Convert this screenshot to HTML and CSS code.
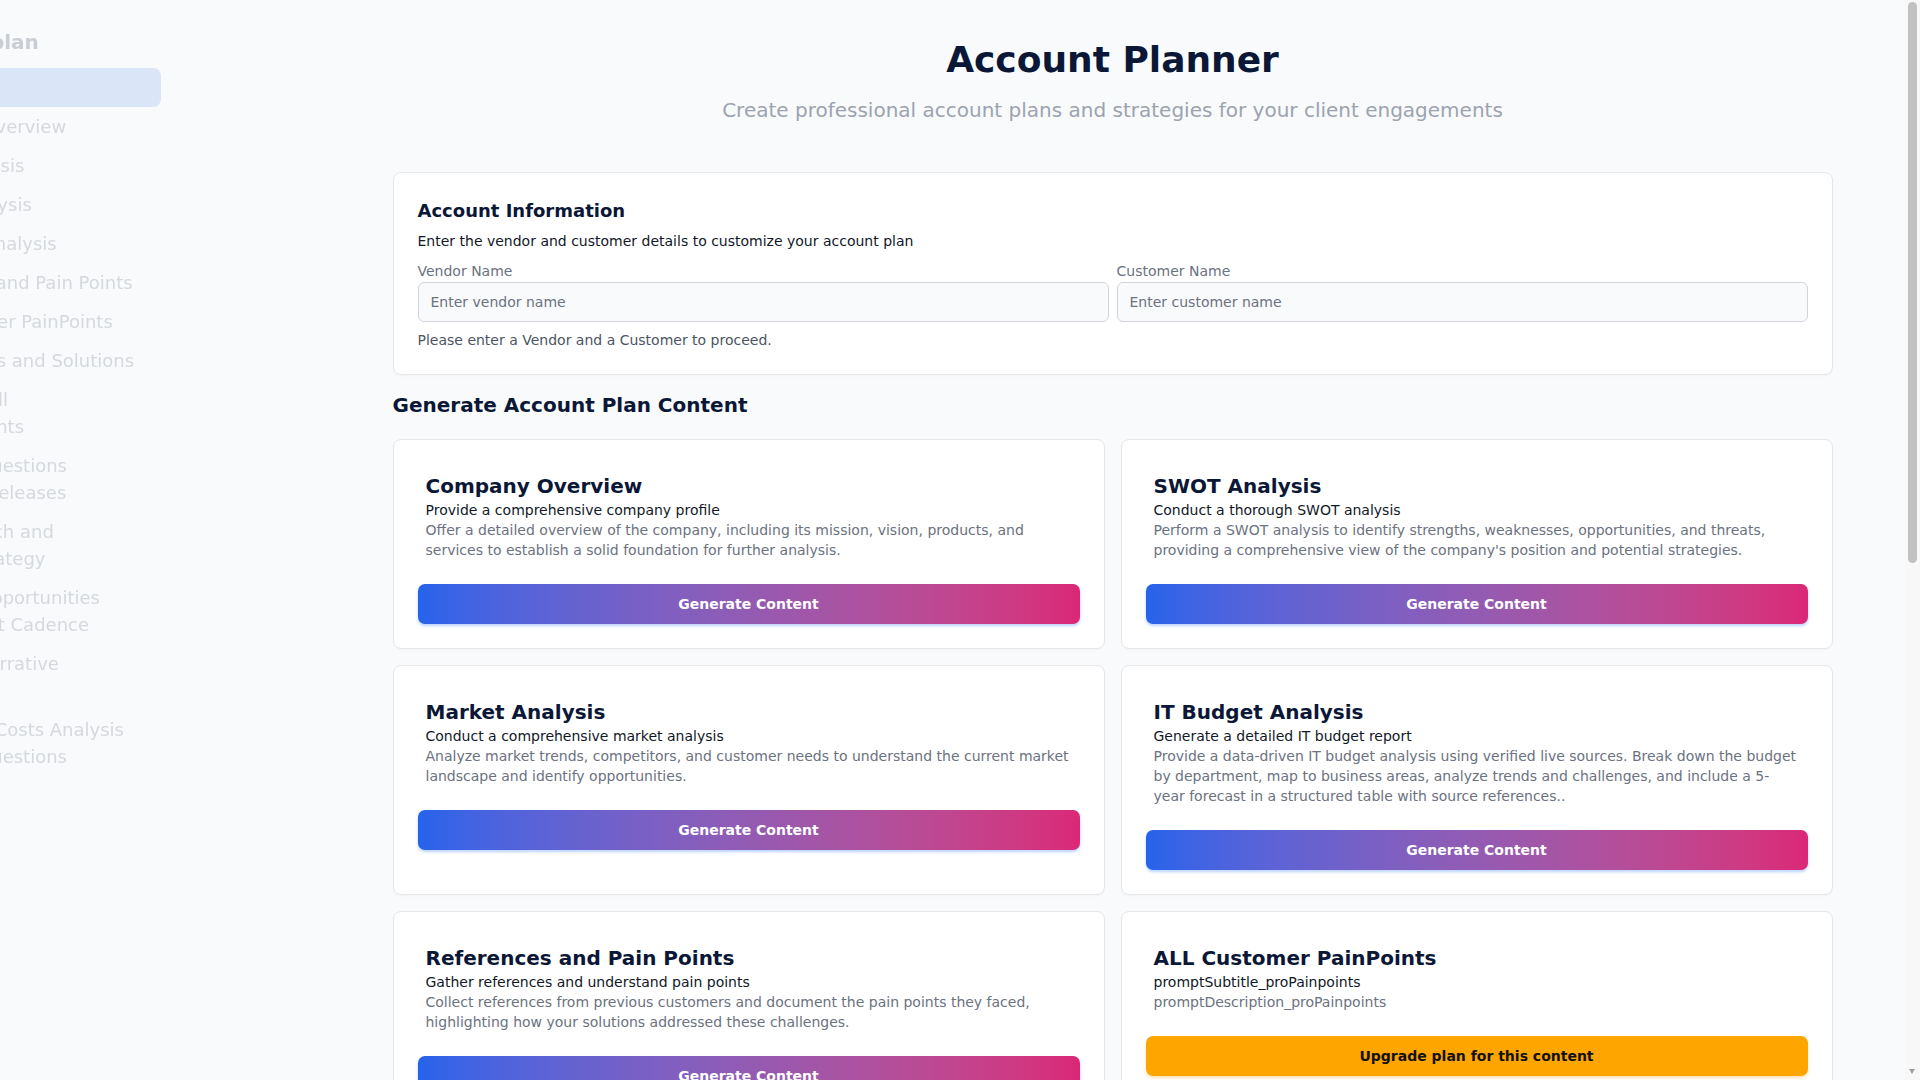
FILE: index.html
```html
<!DOCTYPE html>
<html lang="en">
  <head>
    <meta charset="UTF-8" />
    <meta name="viewport" content="width=device-width, initial-scale=1.0" />
    <title>Account Planner</title>
    <link rel="stylesheet" href="styles.css">
  </head>
  <body>
    <aside class="sidebar">
      <div class="sidebar_title">Account plan</div>
      <ul class="nav">
        <li class="active">Dashboard</li>
        <li>Company Overview</li>
        <li>SWOT Analysis</li>
        <li>Market Analysis</li>
        <li>IT Budget Analysis</li>
        <li>References and Pain Points</li>
        <li>ALL Customer PainPoints</li>
        <li>Key Products and Solutions</li>
        <li>Future Upsell<br>Enhancements</li>
        <li>Strategic Questions<br>Upcoming Releases</li>
        <li>Our Approach and<br>Account Strategy</li>
        <li>Strategic Opportunities<br>Engagement Cadence</li>
        <li>Business Narrative<br>Summary</li>
        <li>Operations Costs Analysis<br>Strategic Questions</li>
      </ul>
    </aside>

    <main class="main">
      <div class="container">
        <header class="page_head">
          <h1>Account Planner</h1>
          <p>Create professional account plans and strategies for your client engagements</p>
        </header>

        <section class="card info_card">
          <h3>Account Information</h3>
          <p class="info_desc">Enter the vendor and customer details to customize your account plan</p>
          <div class="fields">
            <label class="field">
              <span>Vendor Name</span>
              <input type="text" placeholder="Enter vendor name" />
            </label>
            <label class="field">
              <span>Customer Name</span>
              <input type="text" placeholder="Enter customer name" />
            </label>
          </div>
          <p class="hint">Please enter a Vendor and a Customer to proceed.</p>
        </section>

        <h2 class="section_title">Generate Account Plan Content</h2>

        <div class="prompt_grid">
          <div class="card prompt">
            <div class="prompt_head">
              <h3>Company Overview</h3>
              <p class="sub">Provide a comprehensive company profile</p>
              <p class="desc">Offer a detailed overview of the company, including its mission, vision, products, and services to establish a solid foundation for further analysis.</p>
            </div>
            <button class="btn">Generate Content</button>
          </div>

          <div class="card prompt">
            <div class="prompt_head">
              <h3>SWOT Analysis</h3>
              <p class="sub">Conduct a thorough SWOT analysis</p>
              <p class="desc">Perform a SWOT analysis to identify strengths, weaknesses, opportunities, and threats, providing a comprehensive view of the company's position and potential strategies.</p>
            </div>
            <button class="btn">Generate Content</button>
          </div>

          <div class="card prompt">
            <div class="prompt_head">
              <h3>Market Analysis</h3>
              <p class="sub">Conduct a comprehensive market analysis</p>
              <p class="desc">Analyze market trends, competitors, and customer needs to understand the current market landscape and identify opportunities.</p>
            </div>
            <button class="btn">Generate Content</button>
          </div>

          <div class="card prompt">
            <div class="prompt_head">
              <h3>IT Budget Analysis</h3>
              <p class="sub">Generate a detailed IT budget report</p>
              <p class="desc">Provide a data-driven IT budget analysis using verified live sources. Break down the budget by department, map to business areas, analyze trends and challenges, and include a 5-year forecast in a structured table with source references..</p>
            </div>
            <button class="btn">Generate Content</button>
          </div>

          <div class="card prompt">
            <div class="prompt_head">
              <h3>References and Pain Points</h3>
              <p class="sub">Gather references and understand pain points</p>
              <p class="desc">Collect references from previous customers and document the pain points they faced, highlighting how your solutions addressed these challenges.</p>
            </div>
            <button class="btn">Generate Content</button>
          </div>

          <div class="card prompt">
            <div class="prompt_head">
              <h3>ALL Customer PainPoints</h3>
              <p class="sub">promptSubtitle_proPainpoints</p>
              <p class="desc">promptDescription_proPainpoints</p>
            </div>
            <button class="btn btn_upgrade">Upgrade plan for this content</button>
          </div>

          <div class="card prompt">
            <div class="prompt_head">
              <h3>Products and Solutions</h3>
              <p class="sub">Match your offerings to customer needs</p>
              <p class="desc">Identify the products and solutions that best address the customer's business challenges and explain how they support the customer's strategic objectives.</p>
            </div>
            <button class="btn">Generate Content</button>
          </div>

          <div class="card prompt">
            <div class="prompt_head">
              <h3>Upsell Enhancements</h3>
              <p class="sub">promptSubtitle_proUpsell</p>
              <p class="desc">promptDescription_proUpsell</p>
            </div>
            <button class="btn btn_upgrade">Upgrade plan for this content</button>
          </div>

          <div class="card prompt">
            <div class="prompt_head">
              <h3>Questions and Releases</h3>
              <p class="sub">Prepare strategic questions for the customer</p>
              <p class="desc">List the key questions to ask during discovery and summarize upcoming product releases that are relevant to this account.</p>
            </div>
            <button class="btn">Generate Content</button>
          </div>

          <div class="card prompt">
            <div class="prompt_head">
              <h3>Approach and Strategy</h3>
              <p class="sub">Define the account strategy</p>
              <p class="desc">Outline the engagement approach, key stakeholders and the overall strategy to grow the relationship with the customer.</p>
            </div>
            <button class="btn">Generate Content</button>
          </div>

          <div class="card prompt">
            <div class="prompt_head">
              <h3>Opportunities and Cadence</h3>
              <p class="sub">promptSubtitle_proOpportunities</p>
              <p class="desc">promptDescription_proOpportunities</p>
            </div>
            <button class="btn btn_upgrade">Upgrade plan for this content</button>
          </div>

          <div class="card prompt">
            <div class="prompt_head">
              <h3>Business Narrative</h3>
              <p class="sub">Write an executive summary</p>
              <p class="desc">Summarize the account plan in a concise narrative suitable for executive stakeholders, focusing on value, outcomes and next steps.</p>
            </div>
            <button class="btn">Generate Content</button>
          </div>

          <div class="card prompt">
            <div class="prompt_head">
              <h3>Operations Costs Analysis</h3>
              <p class="sub">promptSubtitle_proCosts</p>
              <p class="desc">promptDescription_proCosts</p>
            </div>
            <button class="btn btn_upgrade">Upgrade plan for this content</button>
          </div>
        </div>
      </div>
    </main>

    <!-- page scrollbar as the browser drew it -->
    <div class="scrollbar">
      <div class="thumb"></div>
      <i class="arrow_down"></i>
    </div>
  </body>
</html>
```

FILE: styles.css
```css
* {
  margin: 0;
  padding: 0;
  box-sizing: border-box;
}
body {
  background-color: #f8fafc;
  font-family: "DejaVu Sans", sans-serif;
  color: #0b1736;
}

/* sidebar, slid mostly out of view */
.sidebar {
  position: fixed;
  top: 0;
  left: -138px;
  width: 315px;
  padding: 28px 16px;
}
.sidebar_title {
  padding: 0 14px;
  font-size: 20px;
  line-height: 28px;
  font-weight: bold;
  color: #caced4;
  margin-bottom: 12px;
}
.nav {
  list-style: none;
}
.nav li {
  padding: 6px 12px;
  font-size: 18px;
  line-height: 27px;
  color: #d5d8dd;
  border-radius: 8px;
  white-space: nowrap;
}
.nav li.active {
  background-color: #dbe5f8;
  color: #c3cde2;
}

/* main column */
.main {
  margin-left: 320px;
  margin-right: 15px;
  padding: 40px 0 40px;
}
.container {
  max-width: 1440px;
  margin: 0 auto;
}
.page_head {
  text-align: center;
  margin-bottom: 48px;
}
.page_head h1 {
  font-size: 36px;
  line-height: 40px;
  font-weight: bold;
  color: #0b1736;
  margin-bottom: 16px;
}
.page_head p {
  font-size: 20px;
  line-height: 28px;
  color: #9ca3af;
}

.card {
  background-color: #fff;
  border: 1px solid #e5e7eb;
  border-radius: 8px;
  box-shadow: 0 1px 2px rgba(0, 0, 0, 0.03);
}

.info_card {
  padding: 24px;
}
.info_card h3 {
  font-size: 18px;
  line-height: 28px;
  font-weight: bold;
}
.info_desc {
  margin-top: 6px;
  font-size: 14px;
  line-height: 20px;
  color: #111827;
}
.fields {
  display: grid;
  grid-template-columns: 1fr 1fr;
  gap: 8px;
  margin-top: 10px;
}
.field span {
  display: block;
  font-size: 14px;
  line-height: 20px;
  color: #6b7280;
  margin-bottom: 1px;
}
.field input {
  display: block;
  width: 100%;
  height: 40px;
  padding: 0 12px;
  border: 1px solid #d1d5db;
  border-radius: 6px;
  background-color: #f9fafb;
  font-family: "DejaVu Sans", sans-serif;
  font-size: 14px;
  color: #111827;
  outline: none;
}
.field input::placeholder {
  color: #6b7280;
}
.hint {
  margin-top: 8px;
  font-size: 14px;
  line-height: 20px;
  color: #4b5563;
}

.section_title {
  margin-top: 16px;
  margin-bottom: 20px;
  font-size: 20px;
  line-height: 28px;
  font-weight: bold;
  color: #0b1736;
}

.prompt_grid {
  display: grid;
  grid-template-columns: 1fr 1fr;
  gap: 16px;
}
.prompt {
  padding: 24px;
}
.prompt_head {
  padding: 8px;
}
.prompt_head h3 {
  font-size: 20px;
  line-height: 28px;
  font-weight: bold;
  color: #0b1736;
}
.prompt_head .sub {
  font-size: 14px;
  line-height: 20px;
  color: #111827;
}
.prompt_head .desc {
  font-size: 14px;
  line-height: 20px;
  color: #6b7280;
}

.btn {
  display: block;
  width: 100%;
  height: 40px;
  margin-top: 16px;
  border: none;
  border-radius: 7px;
  background-image: linear-gradient(in oklab to right, #2563eb, #db2777);
  box-shadow: 0 2px 3px rgba(59, 130, 246, 0.35);
  color: #fff;
  font-family: "DejaVu Sans", sans-serif;
  font-size: 14px;
  font-weight: bold;
  cursor: pointer;
}
.btn_upgrade {
  background-image: none;
  background-color: #ffa500;
  box-shadow: 0 2px 3px rgba(255, 165, 0, 0.3);
  color: #111;
}

/* scrollbar strip on the right edge */
.scrollbar {
  position: fixed;
  top: 0;
  right: 0;
  width: 15px;
  height: 100vh;
  background-color: #f8f8f8;
}
.thumb {
  position: absolute;
  top: 2px;
  left: 3px;
  width: 9px;
  height: 561px;
  border-radius: 5px;
  background-color: #c1c1c1;
}
.arrow_down {
  position: absolute;
  bottom: 6px;
  left: 4px;
  width: 0;
  height: 0;
  border-left: 3.5px solid transparent;
  border-right: 3.5px solid transparent;
  border-top: 5px solid #a0a0a0;
}
```
